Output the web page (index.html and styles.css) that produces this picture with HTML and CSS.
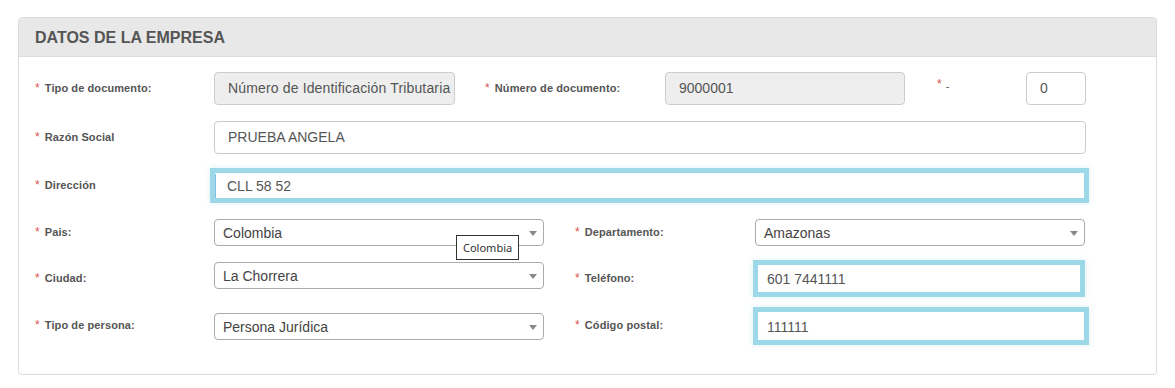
FILE: index.html
```html
<!DOCTYPE html>
<html lang="es">
<head>
    <meta charset="UTF-8">
    <title>Datos de la empresa</title>
    <link rel="stylesheet" href="styles.css">
</head>
<body>
    <div class="panel">
        <div class="panel-heading">DATOS DE LA EMPRESA</div>
        <div class="panel-body">
            <div class="row r1">
                <label class="lbl"><span class="req">*</span>Tipo de documento:</label>
                <div class="field w-doc disabled">Número de Identificación Tributaria</div>
                <label class="lbl lbl-mid"><span class="req">*</span>Número de documento:</label>
                <div class="field w-num disabled">9000001</div>
                <label class="lbl lbl-dv"><span class="req up">*</span>-</label>
                <div class="field w-dv">0</div>
            </div>
            <div class="row r2">
                <label class="lbl"><span class="req">*</span>Razón Social</label>
                <div class="field w-full">PRUEBA ANGELA</div>
            </div>
            <div class="row r3">
                <label class="lbl"><span class="req">*</span>Dirección</label>
                <div class="field focus w-full-focus"><span class="caret"></span>CLL 58 52</div>
            </div>
            <div class="row r4">
                <label class="lbl"><span class="req">*</span>Pais:</label>
                <div class="select">Colombia</div>
                <label class="lbl lbl-right"><span class="req">*</span>Departamento:</label>
                <div class="select">Amazonas</div>
            </div>
            <div class="row r5">
                <label class="lbl"><span class="req">*</span>Ciudad:</label>
                <div class="select sel-low">La Chorrera</div>
                <label class="lbl lbl-right"><span class="req">*</span>Teléfono:</label>
                <div class="field focus w-tel">601 7441111</div>
            </div>
            <div class="row r6">
                <label class="lbl"><span class="req">*</span>Tipo de persona:</label>
                <div class="select">Persona Jurídica</div>
                <label class="lbl lbl-right"><span class="req">*</span>Código postal:</label>
                <div class="field focus w-cp">111111</div>
            </div>
        </div>
    </div>
    <div class="tooltip">Colombia</div>
</body>
</html>
```

FILE: styles.css
```css
body {
    margin: 0;
    font-family: "Liberation Sans", Arial, sans-serif;
    background: #fff;
    color: #555;
}
.panel {
    margin: 17px 0 0 18px;
    width: 1139px;
    height: 358px;
    box-sizing: border-box;
    border: 1px solid #dcdcdc;
    border-radius: 4px;
    box-shadow: 0 1px 1px rgba(0, 0, 0, 0.04);
}
.panel-heading {
    height: 38px;
    line-height: 40px;
    padding-left: 16px;
    background: #e8e8e8;
    border-bottom: 1px solid #dcdcdc;
    border-radius: 3px 3px 0 0;
    font-size: 16px;
    font-weight: bold;
    color: #555;
}
.panel-body {
    padding: 15px 0 0 16px;
}
.row {
    display: flex;
    align-items: center;
}
.r1 { height: 33px; margin-bottom: 16px; }
.r2 { height: 33px; margin-bottom: 14px; }
.r3 { height: 35px; margin-bottom: 16px; }
.r4 { height: 27px; margin-bottom: 14px; }
.r5 { height: 37px; margin-bottom: 10px; }
.r6 { height: 38px; }
.lbl {
    width: 179px;
    flex: none;
    font-size: 11px;
    font-weight: bold;
    letter-spacing: 0.1px;
    color: #555;
    margin-top: -2px;
}
.lbl-mid { width: 180px; margin-left: 30px; }
.lbl-dv { width: 89px; margin-left: 32px; font-weight: normal; margin-top: -6px; }
.lbl-right { width: 180px; margin-left: 31px; }
.req {
    color: #d9534f;
    font-weight: normal;
    font-size: 12px;
    margin-right: 5px;
}
.req.up {
    position: relative;
    top: -2px;
    margin-right: 4px;
}
.field {
    flex: none;
    box-sizing: border-box;
    height: 33px;
    line-height: 31px;
    padding-left: 13px;
    border: 1px solid #ccc;
    border-radius: 4px;
    background: #fff;
    font-size: 14px;
    color: #555;
    white-space: nowrap;
    overflow: hidden;
}
.field.disabled { background: #eee; }
.w-doc { width: 241px; letter-spacing: 0.15px; }
.w-num { width: 240px; }
.w-dv { width: 60px; }
.w-full { width: 872px; }
.field.focus {
    border: 5px solid #9dd8e8;
    border-radius: 0;
    line-height: 25px;
    padding-left: 9px;
    padding-top: 1px;
    box-shadow: 0 0 6px rgba(157, 216, 232, 0.35);
}
.w-full-focus { width: 879px; height: 35px; margin-left: -4px; padding-left: 12px !important; }
.w-tel { width: 332px; height: 37px; margin-left: -2px; line-height: 27px !important; }
.w-cp { width: 336px; height: 38px; margin-left: -2px; line-height: 29px !important; }
.caret {
    display: inline-block;
    width: 1px;
    height: 24px;
    background: #7cc0ea;
    vertical-align: top;
    margin-left: -12px;
    margin-right: 11px;
}
.select {
    flex: none;
    position: relative;
    box-sizing: border-box;
    width: 330px;
    height: 27px;
    line-height: 27px;
    padding-left: 8px;
    border: 1px solid #aaa;
    border-radius: 4px;
    background: #fff;
    font-size: 14px;
    color: #444;
}
.select::after {
    content: "";
    position: absolute;
    right: 6px;
    top: 11px;
    border-left: 4px solid transparent;
    border-right: 4px solid transparent;
    border-top: 5px solid #888;
}
.sel-low { margin-top: -7px; }
.tooltip {
    position: absolute;
    left: 456px;
    top: 235px;
    box-sizing: border-box;
    height: 25px;
    line-height: 23px;
    padding: 0 6px;
    border: 1px solid #333;
    background: #fff;
    font-family: "Noto Sans", "DejaVu Sans", sans-serif;
    font-size: 11px;
    color: #333;
}
```
